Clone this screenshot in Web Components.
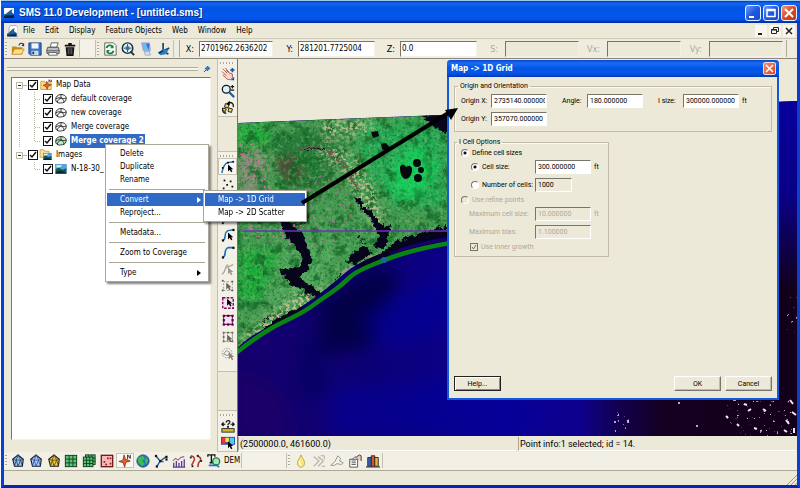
<!DOCTYPE html>
<html lang="en">
<head>
<meta charset="utf-8">
<title>SMS 11.0 Development</title>
<style>
    body {
        margin: 0;
        min-height: 100vh;
        display: flex;
        background: #fff;
        font-family: "DejaVu Sans Condensed", "DejaVu Sans", sans-serif;
        font-size: 8px;
        line-height: 12px;
        color: #000;
    }
</style>
</head>
<body>
<sms-window></sms-window>

<script>
(function () {
    // 16 x 16 drawings, shared by every toolbar and by the tree
    const cursor = (x, y, c = '#000') => `<path transform="translate(${x} ${y})" d="M0 0v8l2-2 1.5 3 1.5-.8L3.600 5.500H6z" fill="${c}"/>`;
    const dots = (pts, c = '#111', s = 2) => pts.map(([x, y]) => `<rect x="${x}" y="${y}" width="${s}" height="${s}" fill="${c}"/>`).join('');
    const mesh = (fill, line) => `<path d="M8 1l6 5-1 8H4L2 6z" fill="${fill}" stroke="#151a30" stroke-width="1.300"/><path d="M8 1L6 7l2 7 3-7zM2 6l4 1 5 0 3-1M6 7l-2 7M11 7l2 7" fill="none" stroke="${line}" stroke-width="1"/>`;
    const grid = (x, y, s) => `<rect x="${x}" y="${y}" width="${s}" height="${s}" fill="#5cc478" stroke="#0b2b14"/><path d="M${x + s / 3} ${y}v${s}M${x + 2 * s / 3} ${y}v${s}M${x} ${y + s / 3}h${s}M${x} ${y + 2 * s / 3}h${s}" stroke="#0b3b1c"/>`;
    const coverage = fill => `<g fill="${fill}" stroke="#222" stroke-width="1.200"><path d="M1 8c0-3 3-6 7-6s7 2 7 5-2 6-5 6-3 1-6 0-3-3-3-5z"/><path d="M3 12c1-3 3-5 6-5M9 2c-2 2-1 4 0 5s3 2 3 5M1 8c3-2 5-2 8-1s4 0 6 0" fill="none"/></g>`;
    const photo = '<rect x="1" y="2" width="14" height="12" fill="#49a6ea" stroke="#1d5d9c" stroke-width=".6"/><path d="M2 3h8l-4 3H2z" fill="#e4f5ff"/><path d="M1 8l4-2 5 3 5-2v7H1z" fill="#11603a"/><path d="M1 12l6-2 8 3v1H1z" fill="#07254c"/>';

    const icons = {
        app: '<rect width="16" height="16" fill="#fff"/><path d="M0 10c5 0 7-6 14-8l-2 4c1 2 3 2 4 4v6H0z" fill="#1b5f99"/><path d="M0 13c5-3 9 0 16-2v5H0z" fill="#0a2440"/>',
        doc: '<path d="M5 0h8l3 3v13H3V4z" fill="#fff" stroke="#8a98ad"/><path d="M0 12c4-1 5-6 11-8l-1 4 4 3v3H0z" fill="#1b62a0"/><path d="M0 14c4-2 9-1 14-2v4H0z" fill="#0a2c50"/>',
        open: '<path d="M1 5h5l1 1h6v8H1z" fill="#c98d1c"/><path d="M4 8h11l-3 6H1z" fill="#ffe184" stroke="#b57b10" stroke-width=".8"/><path d="M9 4c1-3 3-3 5-2" fill="none" stroke="#333" stroke-width="1.200"/><path d="M15 1v4l-3-1z" fill="#333"/>',
        save: '<path d="M1 1h14v14H3l-2-2z" fill="#3b71c4" stroke="#173a7d"/><rect x="4" y="1.500" width="8" height="6" fill="#eef5ff"/><rect x="4" y="10" width="8" height="5" fill="#c9d7e9"/><rect x="5" y="11" width="2" height="3" fill="#173a7d"/>',
        print: '<path d="M5 6l1-5h8l-2 5z" fill="#fff" stroke="#555"/><path d="M2 6h12l1 3v4H1V9z" fill="#b9bdc4" stroke="#444"/><path d="M1 10h14" stroke="#555"/><path d="M3 12h9l1 3H3z" fill="#fff" stroke="#555"/>',
        trash: '<path d="M2 3h12v2H2zM6 1h4v2H6zM3 6h10l-1 10H4z" fill="#111"/><path d="M6 7v7M8 7v7M10 7v7" stroke="#999" stroke-width=".7"/>',
        refresh: '<path d="M2 1h10l3 3v11H2z" fill="#fff" stroke="#555"/><path d="M4 7c1-4 6-4 7-1M12 10c-1 4-6 4-7 1" fill="none" stroke="#15843a" stroke-width="2"/><path d="M12 3v4H8zM4 13V9h4z" fill="#15843a"/>',
        frame: '<circle cx="7.500" cy="7" r="6" fill="#dff0fb" stroke="#173243" stroke-width="1.700"/><path d="M7.500 2.500v9M3 7h9" stroke="#173243"/><path d="M5.500 5h4v4h-4z" fill="#3f718f"/><path d="M11 11l4 4" stroke="#173243" stroke-width="2.200"/>',
        display: '<path d="M3 1h9l1 9H5z" fill="#74b8f1" stroke="#90a5c9"/><path d="M8 2h4l-1 7z" fill="#2d6fd6"/><path d="M6 11h6l1 4H7z" fill="#d8dfea" stroke="#7187ac" stroke-width=".6"/>',
        axes: '<path d="M7 1v9l7-3M7 10l6 4" fill="none" stroke="#14507c" stroke-width="2"/><path d="M1 12l6-4 6 1-3 5-6 1z" fill="#2b7fba"/><path d="M7 10l-5 3" stroke="#0c2f4f" stroke-width="1.500"/>',
        pin: '<path d="M2 14l4-4" stroke="#123" stroke-width="1.500"/><path d="M4 7l5 5 2-3 3-2-5-5-2 3z" fill="#2d7fd0" stroke="#0d3a73"/>',
        pan: '<path d="M2 2l5 5M1 5l5 5M5 1l4 5M2 9l4 4c2 2 6 2 7-1V8l-3-1-4-3" fill="#f7d6cf" stroke="#a34a45" stroke-width="1"/><path d="M13 1v5M10.500 3.500h5" stroke="#1c50a8" stroke-width="1.800"/><path d="M11 15l4 0-0-4z" fill="#1c50a8"/>',
        zoom: '<circle cx="6" cy="6" r="4.500" fill="#dff3ff" stroke="#15191d" stroke-width="1.500"/><path d="M9.500 9.500L15 15" stroke="#1f5d9e" stroke-width="2.500"/><path d="M11 3h4M13 1v4M11 7h4" stroke="#111" stroke-width="1.200"/>',
        rotate: '<path d="M8 2c4-1 7 1 6 5M2 8c-1 4 1 6 4 6" fill="none" stroke="#111" stroke-width="1.500"/><path d="M5 3l4 1-1 4-4-1zM9 8l4 1-1 4-4-1zM2 8l4 1-1 3-3-1z" fill="#f2d457" stroke="#111"/><path d="M10 0v5l-4-2z"/>',
        vertex: '<path d="M1 15C2 8 5 3 8 3l6-1" fill="none" stroke="#1e6fb8" stroke-width="1.600"/>' + dots([[7, 2], [13, 1], [1, 8]]) + cursor(8, 5),
        points: dots([[3, 3], [10, 4], [6, 8], [12, 10], [2, 12]]),
        selvertex: '<path d="M2 13L12 3" stroke="#1e6fb8" stroke-width="1.500"/>' + dots([[2, 12], [12, 2]]) + cursor(8, 6),
        node: '<path d="M2 14L9 4l5 1" fill="none" stroke="#1e6fb8" stroke-width="1.500"/>' + dots([[1, 13], [13, 4]]),
        selarc: '<path d="M2 14c5-1 0-8 6-11l6-1" fill="none" stroke="#1e6fb8" stroke-width="1.700"/>' + dots([[1, 13], [13, 1]], '#111', 2.5) + cursor(8, 5),
        arc: '<path d="M2 14c5-1 0-8 6-11h6" fill="none" stroke="#1e6fb8" stroke-width="1.900"/>' + dots([[1, 13], [13, 2]], '#111', 2.5),
        group: '<path d="M1 14c5-2 2-8 7-11M5 7l9-4" fill="none" stroke="#aaa79c" stroke-width="1.500"/>' + cursor(8, 6, '#99968c'),
        selrect: '<path d="M3 3h10v10H3z" fill="none" stroke="#8f8d84" stroke-dasharray="2 2"/>' + dots([[1, 1], [12, 2], [1, 12], [12, 12]], '#555') + cursor(6, 4, '#66635c'),
        selpoly: '<path d="M2 2h12v12H2z" fill="#f6dff1" stroke="#7b0b65" stroke-width="1.600" stroke-dasharray="3 1.500"/>' + cursor(7, 3),
        poly: '<path d="M3 3h10v10H3z" fill="#f0e2ea" stroke="#8b1272" stroke-width="1.200"/>' + dots([[2, 2], [7, 2], [12, 2], [2, 7], [12, 7], [2, 12], [7, 12], [12, 12]], '#540044', 2.5),
        polygray: '<path d="M3 3h10v10H3z" fill="none" stroke="#969389"/>' + dots([[2, 2], [12, 2], [2, 12], [12, 12], [7, 2], [2, 7]], '#66635c') + cursor(7, 5, '#66635c'),
        circle: '<circle cx="7" cy="7" r="5.500" fill="#f2f1e9" stroke="#999" stroke-dasharray="2 1"/><path d="M3 8l3-4 4 2-2 4z" fill="none" stroke="#888"/>' + cursor(9, 6, '#88857b'),
        measure: '<rect x="1" y="11" width="14" height="4" fill="#d7b52c" stroke="#222"/><path d="M1 6h4M11 6h4M3 4L1 6l2 2M13 4l2 2-2 2M6 4c0-3 5-3 4 0-1 2-2 1-2 3" fill="none" stroke="#111" stroke-width="1.400"/><path d="M7 8h2v2H7z"/>',
        palette: '<rect x="0" y="1" width="16" height="9" fill="#2449b8"/><rect x="1" y="2" width="4" height="7" fill="#e8372d"/><rect x="5" y="2" width="4" height="5" fill="#ffe25a"/><rect x="10" y="2" width="5" height="7" fill="#57cbe5"/>' + cursor(8, 6),
        mesh: mesh('#9fc4e8', '#23486f'),
        mesh2: mesh('#b5cdf2', '#2c58a8'),
        mesh3: mesh('#efce4c', '#644a08'),
        grid: grid(1.5, 1.5, 13),
        grid3: grid(4, 1, 11) + grid(1.5, 3.5, 11),
        scatter: '<rect x="1.500" y="1.500" width="13" height="13" fill="#f4b9b9" stroke="#6d1919" stroke-width="1.500"/>' + dots([[4, 8], [8, 4], [11, 10], [6, 11], [11, 4]], '#a81d1d'),
        map: '<path d="M7 1l1.500 5L14 8 9 9.500 7.500 15 6 10 1 8.500 5.500 7z" fill="#e85f24" stroke="#71240c" stroke-width=".8"/><path d="M11 6V1l3 4V1" fill="none" stroke="#111"/>',
        globe: '<circle cx="8" cy="8" r="7" fill="#2574c8" stroke="#194674"/><path d="M3 4l5-2 2 3-3 3 3 3-3 3-4-4-1-4zM11 4l3 3-2 5-2-4z" fill="#3fbd48"/>',
        river: '<path d="M2 2l5 6 7-5M7 8l-4 7M7 8l4 1" fill="none" stroke="#2c5fa6" stroke-width="1.700"/>' + dots([[1, 1], [6, 7], [13, 2], [2, 13], [13, 5]], '#111', 2.5),
        chart: '<path d="M1 15h14M2 15V10M5 15V8M8 15V10M11 15V8M14 15V6" stroke="#5a3b90" stroke-width="1.500"/><path d="M1 8l3-3 3 2 3-3 4-1" fill="none" stroke="#9a5a86" stroke-width="1.200"/>',
        tracks: '<path d="M2 2c5 1 5 4 3 7l-2 4M9 2c6 2 5 5 2 8l-1 5" fill="none" stroke="#b5382e" stroke-width="1.800"/>' + dots([[1, 3], [9, 1], [3, 13], [13, 7]]),
        gis: '<path d="M1 3V1h8v2M5 1v9M3 10h4" fill="none" stroke="#111" stroke-width="1.500"/><circle cx="10.500" cy="8.500" r="4" fill="#a8e6b7" stroke="#137e4b" stroke-width="1.500"/><path d="M2 13h9l3 2" fill="none" stroke="#2970b5" stroke-width="2"/>',
        bulb: '<path d="M8 1c1 4 4 5 4 9s-2 5-4 5-4-1-4-5 3-5 4-9z" fill="#f7e684" stroke="#b8a648"/><path d="M6 8c0 3 1 4 2 5" stroke="#fffce0" stroke-width="1.500" fill="none"/>',
        chevrons: '<path d="M2 3l6 5-6 6M7 3l6 5-6 6" fill="none" stroke="#bbb8ac" stroke-width="1.500"/><path d="M10 2h4v4M11 14h4" stroke="#a5a297" fill="none"/>',
        plane: '<path d="M1 13l5-5 3-6 3 3-1 3 4 2-2 2-5-1-3 2z" fill="#f3f2ec" stroke="#8e8b82"/>',
        props: '<path d="M2 6h9v9H2z" fill="#fff" stroke="#444"/><path d="M4 8h5M4 10h5M4 12h5M5 6l3-3 4 3" stroke="#555" fill="none"/><path d="M9 4l4-3 2 1v6" fill="#f3c8b8" stroke="#333"/>',
        books: '<path d="M2 4h4v10H2z" fill="#2f66c7" stroke="#222"/><path d="M6 2h4v12H6z" fill="#e34e2f" stroke="#222"/><path d="M10 4h4v10h-4z" fill="#e7b92c" stroke="#222"/><path d="M0 14h16v1.500H0z" fill="#444"/>',
        folder: '<path d="M1 3h5l1 2h8v9H1z" fill="#fbd77b" stroke="#c39433"/><path d="M9 3l1.500 3.500L15 8l-4 1.500L9.500 14 8 10 4 8.500 8 7z" fill="#e85f24" stroke="#71240c" stroke-width=".7"/><path d="M12 4V1l3 3V1" fill="none" stroke="#111"/>',
        images: '<path d="M0 1h5l1 2h6v8H0z" fill="#fbe29a" stroke="#c39433"/><g transform="translate(4 4) scale(.75)">' + photo + '</g>',
        photo,
        coverage: coverage('#f4f4f4'),
        active: coverage('#bdeec4')
    };

    // every element clones its template into an open shadow root
    function define(name, html, setup) {
        const template = document.createElement('template');
        template.innerHTML = html;
        customElements.define(name, class extends HTMLElement {
            connectedCallback() {
                if (this.shadowRoot) return;
                const root = this.attachShadow({ mode: 'open' });
                root.appendChild(template.content.cloneNode(true));
                if (setup) setup(this, root);
            }
        });
    }

    class SmsIcon extends HTMLElement {
        constructor() {
            super();
            this.attachShadow({ mode: 'open' }).innerHTML = `
<style>
    :host { display: block; width: 14px; height: 14px; flex: none; }
    svg { display: block; width: 100%; height: 100%; }
</style>
<svg viewBox="0 0 16 16" aria-hidden="true"></svg>`;
        }

        static get observedAttributes() {
            return ['name'];
        }

        attributeChangedCallback(attr, oldValue, newValue) {
            this.shadowRoot.querySelector('svg').innerHTML = icons[newValue] || '';
        }
    }
    customElements.define('sms-icon', SmsIcon);

    define('tool-button', `
<style>
    :host { display: flex; min-width: 0; }
    button {
        flex: 1;
        min-width: 0;
        display: flex;
        align-items: center;
        justify-content: center;
        padding: 0;
        border: 0;
        background: none;
        color: inherit;
        font: inherit;
    }
    :host([checked]) button { background: #faf9f4; box-shadow: inset 0 0 0 1px #c8c4b4; }
</style>
<button type="button"><slot></slot></button>`, (host, root) => {
        root.querySelector('button').setAttribute('aria-label', host.getAttribute('label'));
        const name = host.getAttribute('icon');
        if (name) host.innerHTML = `<sms-icon name="${name}"></sms-icon>`;
    });

    // dotted grip followed by a run of buttons
    define('tool-group', `
<style>
    :host { display: flex; flex: none; align-items: stretch; box-sizing: border-box; border-right: 1px solid #c5c1b0; }
    .grip { flex: none; width: 2px; margin: 2px 2px 2px 1px; background: repeating-linear-gradient(#a9a594 0 1px, #f7f5ec 1px 3px); }
    .run { flex: 1; display: flex; min-width: 0; }
    ::slotted(tool-button) { flex: 1; }
    :host([vertical]) { flex-direction: column; border-right: 0; border-bottom: 1px solid #c5c1b0; }
    :host([vertical]) .grip { width: auto; height: 2px; margin: 3px 2px 1px; background: repeating-linear-gradient(90deg, #a9a594 0 1px, #f7f5ec 1px 3px); }
    :host([vertical]) .run { flex-direction: column; }
    :host([vertical]) ::slotted(tool-button) { flex: 0 0 17px; }
</style>
<div class="grip"></div>
<div class="run"><slot></slot></div>`);

    define('title-bar', `
<style>
    :host {
        display: flex;
        align-items: center;
        gap: 5px;
        height: 23px;
        padding: 2px 3px 0;
        box-sizing: border-box;
        background: linear-gradient(#9cc8e8 0 1px, #0a3fd0 1px 2px, #1767f5 3px, #0253e2 8px, #0358ee 17px, #0550e0 20px, #0030b0 22px);
        color: #fff;
        font: bold 10px/14px "Liberation Sans", Arial, sans-serif;
        text-shadow: 1px 1px 0 #0a2a80;
    }
    sms-icon { width: 10px; height: 10px; }
    h1 { flex: 1; margin: 0; font: inherit; white-space: nowrap; }
    .buttons { display: flex; gap: 2px; }
    button {
        width: 16px;
        height: 16px;
        padding: 0;
        border: 1px solid #e6efff;
        border-radius: 3px;
        background: linear-gradient(135deg, #6f9af8, #2059e0 50%, #184ccf);
    }
    .close { background: linear-gradient(135deg, #f09a7c, #dd4a25 50%, #c03410); }
    svg { display: block; width: 14px; height: 14px; }
</style>
<sms-icon name="app"></sms-icon>
<h1><slot></slot></h1>
<div class="buttons">
    <button type="button" aria-label="Minimize"><svg viewBox="0 0 14 14"><path d="M3 10h5v2H3z" fill="#fff"/></svg></button>
    <button type="button" aria-label="Maximize"><svg viewBox="0 0 14 14"><path d="M3 3.500h8v7H3zM3 4.500h8" fill="none" stroke="#fff" stroke-width="1.500"/></svg></button>
    <button type="button" class="close" aria-label="Close"><svg viewBox="0 0 14 14"><path d="M3 3l8 8M11 3l-8 8" stroke="#fff" stroke-width="2"/></svg></button>
</div>`);

    define('menu-bar', `
<style>
    :host { display: flex; align-items: center; height: 16px; padding: 0 2px 0 3px; border-bottom: 1px solid #cfcbbb; box-sizing: border-box; }
    sms-icon { width: 11px; height: 12px; margin-right: 5px; }
    nav { flex: 1; display: flex; gap: 10px; }
    button { padding: 0; border: 0; background: none; font: inherit; color: inherit; }
    .mdi { display: flex; gap: 2px; }
    .mdi button { width: 12px; height: 12px; background: #f8f6ee; }
    svg { display: block; width: 12px; height: 12px; fill: none; stroke: #222; }
</style>
<sms-icon name="doc"></sms-icon>
<nav></nav>
<div class="mdi">
    <button type="button" aria-label="Minimize document"><svg viewBox="0 0 12 12"><path d="M3 9h4" stroke-width="2"/></svg></button>
    <button type="button" aria-label="Restore document"><svg viewBox="0 0 12 12"><path d="M4.500 4V2.500h5v4H8M2.500 4.500h5v4h-5zM2 5h6"/></svg></button>
    <button type="button" aria-label="Close document"><svg viewBox="0 0 12 12"><path d="M3 3l6 6M9 3l-6 6" stroke-width="1.500"/></svg></button>
</div>`, (host, root) => {
        root.querySelector('nav').innerHTML = host.getAttribute('items').split('|')
            .map(item => `<button type="button">${item}</button>`).join('');
    });

    define('coord-field', `
<style>
    :host { flex: 1; display: flex; align-items: center; min-width: 0; }
    label { flex: none; box-sizing: border-box; width: 25px; padding-right: 5px; text-align: right; font-size: 9px; }
    input {
        flex: 1;
        min-width: 0;
        height: 16px;
        box-sizing: border-box;
        padding: 0 0 1px 1px;
        border: 1px solid;
        border-color: #77746a #f4f2e8 #f4f2e8 #77746a;
        background: #fff;
        font: inherit;
    }
    input:disabled { background: #ece9d8; }
    :host([disabled]) label { width: 28px; padding-right: 7px; color: #aca899; }
    :host([narrow]) { flex: 0 0 93px; }
    :host([narrow]) label { width: 19px; }
</style>
<label for="value"></label><input id="value" type="text">`, (host, root) => {
        const input = root.querySelector('input');
        root.querySelector('label').textContent = host.getAttribute('label');
        input.value = host.getAttribute('value') || '';
        input.disabled = host.hasAttribute('disabled');
    });

    define('tree-item', `
<style>
    :host { display: flex; align-items: center; height: 14px; }
    .guide { flex: none; width: 16px; height: 14px; fill: none; stroke: #b9b6a8; }
    .indent { display: none; }
    :host([child]) .indent { display: block; width: 16px; margin-right: -1px; }
    input {
        appearance: none;
        flex: none;
        width: 10px;
        height: 10px;
        margin: 0;
        border: 1px solid #111;
        background: #fff;
    }
    .check { position: relative; display: flex; margin-right: 1px; }
    .check svg { position: absolute; left: 1px; top: 1px; width: 8px; height: 8px; pointer-events: none; visibility: hidden; }
    input:checked + svg { visibility: visible; }
    sms-icon { width: 14px; height: 12px; margin-right: 2px; }
    label { padding: 0 1px; line-height: 14px; white-space: nowrap; }
    :host([selected]) label { background: #316ac5; color: #fff; font-weight: bold; }
</style>
<svg class="guide indent" viewBox="0 0 16 14"></svg>
<svg class="guide" viewBox="0 0 16 14"></svg>
<span class="check"><input id="on" type="checkbox" checked><svg viewBox="0 0 8 8"><path d="M1 4l2 2 4-5" fill="none" stroke="#111" stroke-width="1.500"/></svg></span>
<sms-icon></sms-icon>
<label for="on"><slot></slot></label>`, (host, root) => {
        const [indent, guide] = root.querySelectorAll('.guide');
        const last = host.hasAttribute('last');
        if (host.hasAttribute('child')) {
            indent.innerHTML = host.hasAttribute('open') ? '<path d="M7.500 0v14" stroke-dasharray="1 1"/>' : '';
            guide.innerHTML = `<path d="M7.500 0v${last ? 7 : 14}M8 7.500h6" stroke-dasharray="1 1"/>`;
        } else {
            guide.innerHTML = '<path d="M4.500 4.500h6v6h-6z" fill="#fff"/><path d="M6 7.500h3" stroke="#222"/><path d="M11 7.500h4"/>';
        }
        root.querySelector('sms-icon').setAttribute('name', host.getAttribute('icon'));
    });

    define('popup-menu', `
<style>
    :host {
        position: absolute;
        z-index: 2;
        box-sizing: border-box;
        width: 104px;
        padding: 2px 1px;
        border: 1px solid #aca899;
        background: #fff;
        box-shadow: 2px 2px 2px rgba(0, 0, 0, .5);
    }
</style>
<slot></slot>`);

    define('popup-item', `
<style>
    :host { display: block; }
    button {
        display: flex;
        align-items: center;
        width: 100%;
        height: 13px;
        padding: 0 6px 0 13px;
        border: 0;
        background: none;
        color: inherit;
        font: inherit;
        line-height: 13px;
        text-align: left;
        white-space: nowrap;
    }
    span { flex: 1; }
    svg { display: none; width: 4px; height: 6px; fill: currentColor; }
    :host([submenu]) svg { display: block; }
    :host([active]) button { background: #316ac5; color: #fff; }
</style>
<button type="button"><span><slot></slot></span><svg viewBox="0 0 4 6"><path d="M0 0l4 3-4 3z"/></svg></button>`);

    define('popup-divider', `
<style>
    :host { display: flex; align-items: center; height: 7px; }
    hr { flex: 1; height: 1px; margin: 0 2px; border: 0; background: #aca899; }
</style>
<hr>`);

    // satellite picture: land on the upper left, ocean below, arc along the coast
    define('map-view', `
<style>
    :host { display: block; min-height: 0; overflow: hidden; background: #ece9d8; }
    svg { display: block; width: 100%; height: 100%; }
</style>
<svg viewBox="238 60 559 376" preserveAspectRatio="xMinYMin slice" role="img" aria-label="Map">
    <defs>
        <clipPath id="image"><path d="M238 123L797 101V436H238z"/></clipPath>
        <clipPath id="land"><path d="M238 123L797 101 640 244 447 232C425 234 405 243 389 250S355 262 338 279C322 292 312 300 290 314S252 333 238 347z"/></clipPath>
        <linearGradient id="sea" x1="238" x2="797" y1="0" y2="0" gradientUnits="userSpaceOnUse">
            <stop offset="0" stop-color="#16006c"/><stop offset=".25" stop-color="#0c0078"/>
            <stop offset=".48" stop-color="#0d0092"/><stop offset=".61" stop-color="#0e008e"/><stop offset=".68" stop-color="#120050"/>
            <stop offset=".76" stop-color="#140020"/><stop offset="1" stop-color="#12001a"/>
        </linearGradient>
        <linearGradient id="east" x1="0" x2="0" y1="101" y2="290" gradientUnits="userSpaceOnUse">
            <stop offset="0" stop-color="#08009c"/><stop offset=".5" stop-color="#0a0086"/><stop offset="1" stop-color="#12001a"/>
        </linearGradient>
        <filter id="soft" x="-50%" y="-50%" width="200%" height="200%"><feGaussianBlur stdDeviation="9"/></filter>
        <filter id="blur" x="-50%" y="-50%" width="200%" height="200%"><feGaussianBlur stdDeviation="5"/></filter>
        <filter id="rough" x="-20%" y="-20%" width="140%" height="140%" color-interpolation-filters="sRGB"><feTurbulence type="fractalNoise" baseFrequency=".22" numOctaves="2" seed="8"/><feDisplacementMap in="SourceGraphic" scale="8" xChannelSelector="R" yChannelSelector="G"/></filter>
        <filter id="bright" x="0" y="0" width="100%" height="100%" color-interpolation-filters="sRGB"><feTurbulence type="fractalNoise" baseFrequency=".25" numOctaves="3" seed="4"/><feColorMatrix values="0 0 0 0 .5  0 0 0 0 .74  0 0 0 0 .45  5 0 0 0 -2.5"/></filter>
        <filter id="green" x="0" y="0" width="100%" height="100%" color-interpolation-filters="sRGB"><feTurbulence type="fractalNoise" baseFrequency=".09" numOctaves="4" seed="21"/><feColorMatrix values="0 0 0 0 .08  0 0 0 0 .42  0 0 0 0 .16  0 5 0 0 -2.5"/></filter>
        <filter id="pink" x="0" y="0" width="100%" height="100%" color-interpolation-filters="sRGB"><feTurbulence type="fractalNoise" baseFrequency=".28" numOctaves="2" seed="13"/><feColorMatrix values="0 0 0 0 .8  0 0 0 0 .42  0 0 0 0 .62  0 0 8 0 -4.9" result="n"/><feComposite in="n" in2="SourceAlpha" operator="in"/></filter>
        <filter id="sand" x="-10%" y="-10%" width="120%" height="120%" color-interpolation-filters="sRGB"><feTurbulence type="fractalNoise" baseFrequency=".3" numOctaves="3" seed="3"/><feColorMatrix values="0 0 0 0 .76  0 0 0 0 .74  0 0 0 0 .58  0 6 0 0 -2.8" result="n"/><feGaussianBlur in="SourceAlpha" stdDeviation="5" result="a"/><feComposite in="n" in2="a" operator="in"/></filter>
        <filter id="dark" x="0" y="0" width="100%" height="100%" color-interpolation-filters="sRGB"><feTurbulence type="fractalNoise" baseFrequency=".4" numOctaves="2" seed="30"/><feColorMatrix values="0 0 0 0 .06  0 0 0 0 .28  0 0 0 0 .12  0 0 6 0 -3.4"/></filter>
        <filter id="stars" x="0" y="0" width="100%" height="100%" color-interpolation-filters="sRGB"><feTurbulence type="fractalNoise" baseFrequency=".3" numOctaves="2" seed="6"/><feColorMatrix values="0 0 0 0 .85  0 0 0 0 .66  0 0 0 0 .88  14 0 0 0 -9.8" result="n"/><feComposite in="n" in2="SourceAlpha" operator="in"/></filter>
    </defs>
    <g clip-path="url(#image)">
        <rect x="238" y="101" width="559" height="335" fill="url(#sea)"/>
        <rect x="770" y="101" width="27" height="200" fill="url(#east)"/>
        <g filter="url(#soft)">
            <path d="M320 300l60-34 20 10-30 70-50 10z" fill="#06003c" opacity=".8"/>
            <path d="M360 320l90-50v60l-60 20z" fill="#0c00a0" opacity=".5"/>
            <path d="M238 370l40 20 20 46h-60z" fill="#220060" opacity=".5"/>
            <path d="M330 390l120-10 110 30-40 26H330z" fill="#0a00a0" opacity=".5"/>
            <path d="M300 310l30 80-30 10z" fill="#0a0058" opacity=".6"/>
        </g>
        <path d="M355 268C375 250 410 236 447 226V244C410 250 390 262 362 270z" fill="#060028"/>
        <path d="M390 253c16-8 35-12 57-16v4c-22 3-40 8-57 14z" fill="#14006c"/>
        <g clip-path="url(#land)">
            <rect x="238" y="101" width="260" height="250" fill="#439b50"/>
            <g filter="url(#blur)">
                <path d="M365 122h80v85h-50l-40-45z" fill="#23ac54"/>
                <path d="M238 125h30v40h-30zM240 250h40l-20 50h-22z" fill="#1fae3a"/>
                <path d="M270 135l60-10 15 30-30 40-35-10z" fill="#287c3a"/>
                <path d="M272 160l22-6 10 20-14 12z" fill="#4f4a38"/>
                <path d="M395 165l22-20 18 20-18 34-24-6z" fill="#16ce5c"/>
                <path d="M238 150h30l-8 45-22 10z" fill="#7c8f72"/>
                <path d="M290 240h50l-20 50-60 30z" fill="#4fa85c"/>
            </g>
            <rect x="238" y="101" width="210" height="250" filter="url(#green)" opacity=".8"/>
            <rect x="238" y="101" width="210" height="250" filter="url(#bright)" opacity=".4"/>
            <rect x="238" y="101" width="210" height="250" filter="url(#dark)" opacity=".4"/>
            <path d="M395 165l22-20 20 20-18 34-24-6z" fill="#16ce5c" opacity=".5" filter="url(#blur)"/>
            <path d="M238 140l24 5 10 30 20 40 20 10-20 20-30-5-24-10z" filter="url(#pink)"/>
            <path d="M270 200l60-30 30 40-30 40-50-10z" filter="url(#pink)" opacity=".6"/>
            <path d="M320 120h60l-10 14-50 5zM318 146c30-6 52 20 60 54l10 30h-15l-30-60-25-14zM238 340l60-50 60-5 60-45h30v14l-90 35-110 65z" filter="url(#sand)"/>
            <path d="M400 240l47-14v14l-50 14zM340 272l50-24 8 8-50 24z" fill="#c9a49a" opacity=".6" filter="url(#rough)"/>
        </g>
        <g fill="#07041c" filter="url(#rough)">
            <path d="M422 115l28-2v20l-12-3-8-8z"/>
            <path d="M280 221l8-2 6 9 8 4 5 14 5 10-3 13-9 8 6 6 10 5 4 9-9-1-8-8-10-1-7-8-8-9 12-2 10-2 2-8-6-12-8-8-7-14z"/>
            <path d="M355 198l4-1 5 10 8 4 6 9 6 7 7-2-2 10-3 12-6 2-7-3 6-8-3-10-6-10-6-5z"/>
            <path d="M346 262l10-11 10-5 6 8-18 10zM382 252l14-10 22-8 30-9v9l-34 8-26 12z"/>
            <path d="M262 328l20-12 22-10 2 4-40 22z"/>
        </g>
        <g fill="none" stroke="#0b0c1e" filter="url(#rough)">
            <path d="M301 150c8-6 16-2 22 0s17 8 23 18l12 22" stroke="#6d5c50" stroke-width="2"/>
            <path d="M302 150c8-4 16-2 22 0" stroke-width="1.200"/>
            <path d="M288 224h12c6 0 8-4 8-10M358 236l12 14M262 326l8-12M326 296l14-22"/>
        </g>
        <g fill="#06080d">
            <path d="M400 167c2-4 5-2 6 0 3-2 7-1 6 4s-3 8-7 8c-4-2-5-7-5-12z"/>
            <circle cx="417" cy="163" r="4"/><circle cx="421" cy="170" r="3"/><circle cx="418" cy="178" r="4"/>
            <path d="M381 144l5-1 4 5-3 4-5-3zM371 132l7-1 1 5-6 2z"/>
        </g>
        <path d="M242 231H447" stroke="#6a35b5" stroke-width="1.500"/>
        <path d="M236 353C256 337 262 334 272 328S300 315 312 306 330 294 340 286 350 274 372 265 410 250 450 243" fill="none" stroke="#0a8414" stroke-width="4.500"/>
        <circle cx="384" cy="260" r="3" fill="#1767a0"/>
        <path d="M612 410l20 4-6 21-8-6zM722 408l12-10 30 4 33-4v38h-60zM783 290l14 5v42l-10-8z" filter="url(#stars)"/>
        <path d="M780 424l6-12 4-10 10-4v40h-22z" filter="url(#stars)"/>
        <path d="M734 399l2 1M744 404l3 1M748 411l3-2M763 409l3 2M754 428l3 1M726 416l2 2M786 420l3 4M792 412l4 3M790 400l3 4M794 428v5M784 430l3 2M737 424l2 2" stroke="#fbe2f6" stroke-width="2"/>
        <path d="M614 422h2M615 431h1M696 426h2M678 403h2" stroke="#b9a4cc" stroke-width="2"/>
    </g>
</svg>`);

    define('status-bar', `
<style>
    :host { display: flex; height: 14px; margin: 1px 1px 1px 0; gap: 2px; font: 9px/14px Roboto, "Liberation Sans", sans-serif; }
    div { flex: 1; min-width: 0; box-sizing: border-box; padding-left: 1px; border-left: 1px solid #aca899; border-bottom: 1px solid #fff; white-space: nowrap; }
</style>
<div><slot name="cursor"></slot></div><div><slot name="info"></slot></div>`);

    // label + text box (+ unit) used inside the dialog
    define('number-field', `
<style>
    :host { display: flex; align-items: center; }
    label { width: 30px; white-space: nowrap; }
    input {
        width: 56px;
        height: 14px;
        box-sizing: border-box;
        padding: 0 1px 1px 2px;
        border: 1px solid;
        border-color: #77746a #fff #fff #77746a;
        background: #fff;
        font: inherit;
    }
    .unit { padding-left: 3px; }
    :host([short]) label { width: 25px; }
    :host([wide]) label { width: 66px; }
    :host([disabled]) { color: #aca899; }
    input:disabled { background: #ece9d8; color: #aca899; }
</style>
<label for="value"></label><input id="value" type="text"><span class="unit"><slot></slot></span>`, (host, root) => {
        const input = root.querySelector('input');
        root.querySelector('label').textContent = host.getAttribute('label');
        input.value = host.getAttribute('value');
        input.disabled = host.hasAttribute('disabled');
    });

    define('grid-dialog', `
<style>
    :host {
        position: absolute;
        z-index: 1;
        display: flex;
        flex-direction: column;
        box-sizing: border-box;
        border: 2px solid #1259dc;
        border-top: 0;
        border-radius: 4px 4px 0 0;
        background: #ece9d8;
        font: 7px/10px Roboto, "Liberation Sans", sans-serif;
    }
    header {
        display: flex;
        align-items: center;
        height: 17px;
        margin: 0 -2px;
        padding: 0 3px 0 4px;
        border-radius: 4px 4px 0 0;
        background: linear-gradient(#0a44cc, #1a6cf5 3px, #0455e6 8px, #0556e8 13px, #0038b8);
        color: #fff;
    }
    h2 { flex: 1; margin: 0; font: bold 8px/12px "DejaVu Sans Condensed", sans-serif; }
    header button { width: 13px; height: 13px; padding: 0; border: 1px solid #f3d9d2; border-radius: 2px; background: linear-gradient(135deg, #ee9078, #d8431f); }
    header svg { display: block; width: 11px; height: 11px; }
    form { flex: 1; display: flex; flex-direction: column; padding: 4px 5px 7px; }
    fieldset { margin: 0; min-width: 0; border: 1px solid #c0bca9; box-shadow: inset 1px 1px 0 #fbf9f0; padding: 3px 6px 5px; }
    legend { margin-left: -3px; padding: 0 2px; }
    .origin { display: grid; grid-template-columns: auto auto auto 1fr; gap: 4px 12px; }
    .cells { width: 155px; box-sizing: border-box; margin-top: 5px; padding: 0 5px 4px; }
    .cells .stack { display: flex; flex-direction: column; }
    .row { display: flex; align-items: center; height: 18px; }
    .row.low { height: 11px; }
    .row.sub { padding-left: 10px; }
    .row.text { padding-left: 9px; }
    .row label { white-space: nowrap; }
    .row.sub > label { width: 53px; }
    .disabled { color: #aca899; }
    input[type=text] {
        width: 56px;
        height: 14px;
        box-sizing: border-box;
        padding: 0 1px 1px 2px;
        border: 1px solid;
        border-color: #77746a #fff #fff #77746a;
        background: #fff;
        font: inherit;
    }
    input.count { width: 37px; background: #ece9d8; }
    .unit { padding-left: 3px; }
    input[type=radio], input[type=checkbox] {
        appearance: none;
        flex: none;
        width: 8px;
        height: 8px;
        margin: 0 3px 0 1px;
        box-sizing: border-box;
        border: 1px solid;
        border-color: #77746a #fff #fff #77746a;
        background: #fff;
    }
    input[type=radio] { border-radius: 50%; }
    input[type=radio]:checked { background: radial-gradient(circle, #111 0 1px, #fff 2px); }
    input:disabled { background-color: #ece9d8; }
    .tick { position: relative; display: flex; }
    .tick svg { position: absolute; left: 2px; top: 1px; width: 6px; height: 6px; }
    .tick input { border-color: #77746a; }
    footer { display: flex; gap: 4px; margin-top: auto; }
    footer button {
        width: 47px;
        height: 15px;
        padding: 0;
        border: 1px solid;
        border-color: #fff #77746a #77746a #fff;
        box-shadow: inset -1px -1px 0 #c0bca9;
        background: #ece9d8;
        font: inherit;
    }
    footer .help { margin-right: auto; border-color: #222; box-shadow: inset 1px 1px 0 #fff, inset -1px -1px 0 #8d8a7d; }
</style>
<header>
    <h2>Map -&gt; 1D Grid</h2>
    <button type="button" aria-label="Close"><svg viewBox="0 0 11 11"><path d="M2 2l7 7M9 2L2 9" stroke="#fff" stroke-width="1.500"/></svg></button>
</header>
<form>
    <fieldset>
        <legend>Origin and Orientation</legend>
        <div class="origin">
            <number-field label="Origin X:" value="2735140.000000"></number-field>
            <number-field label="Angle:" value="180.000000" short></number-field>
            <number-field label="I size:" value="300000.000000" short>ft</number-field>
            <span></span>
            <number-field label="Origin Y:" value="357070.000000"></number-field>
        </div>
    </fieldset>
    <fieldset class="cells">
        <legend>I Cell Options</legend>
        <div class="stack">
            <div class="row low"><input type="radio" id="define" name="mode" checked><label for="define">Define cell sizes</label></div>
            <div class="row sub"><input type="radio" id="size" name="by" checked><label for="size">Cell size:</label><input type="text" value="300.000000" aria-label="Cell size"><span class="unit">ft</span></div>
            <div class="row sub"><input type="radio" id="number" name="by"><label for="number">Number of cells:</label><input type="text" class="count" value="1000" aria-label="Number of cells"></div>
            <div class="row low disabled"><input type="radio" id="refine" name="mode" disabled><label for="refine">Use refine points</label></div>
            <div class="row text"><number-field label="Maximum cell size:" value="10.000000" wide disabled>ft</number-field></div>
            <div class="row text"><number-field label="Maximum bias:" value="1.100000" wide disabled></number-field></div>
            <div class="row low text disabled"><span class="tick"><input type="checkbox" id="growth" checked disabled><svg viewBox="0 0 6 6"><path d="M1 3l1.500 2L5 1" fill="none" stroke="#77746a"/></svg></span><label for="growth">Use inner growth</label></div>
        </div>
    </fieldset>
    <footer>
        <button type="button" class="help">Help...</button>
        <button type="button">OK</button>
        <button type="button">Cancel</button>
    </footer>
</form>`);

    // "name*" marks the pressed button
    const buttons = list => list.split(' ').map(item => {
        const [icon, on] = item.split('*');
        return `<tool-button icon="${icon}" label="${icon}"${on === undefined ? '' : ' checked'}></tool-button>`;
    }).join('');

    define('sms-window', `
<style>
    :host {
        position: relative;
        flex: 1;
        display: flex;
        flex-direction: column;
        min-width: 0;
        box-sizing: border-box;
        margin-left: 1px;
        background: #ece9d8;
    }
    .frame { flex: 1; display: flex; flex-direction: column; min-height: 0; border: solid #0a3fd6; border-width: 0 3px 3px; border-bottom-color: #0028b0; }
    .top { display: flex; height: 20px; box-sizing: border-box; padding: 1px 0; border-bottom: 1px solid #8d8a7d; background: #efecde; }
    .top tool-group:first-child { width: 76px; }
    .top tool-group:nth-of-type(2) { width: 78px; }
    .blank { flex: none; background: #f4f2e8; border-right: 1px solid #c5c1b0; }
    .top .blank { width: 15px; }
    .fields { flex: 1; display: flex; min-width: 0; margin-left: 5px; border-left: 1px solid #aca899; }
    .tail { flex: none; width: 14px; background: linear-gradient(90deg, transparent 3px, #aca899 3px 4px, transparent 4px); }
    main { flex: 1; display: flex; min-height: 0; }
    .side { flex: none; width: 213px; display: flex; flex-direction: column; box-sizing: border-box; padding: 1px 6px 12px 7px; }
    .dock { display: flex; align-items: center; gap: 4px; height: 17px; margin-left: -4px; }
    .dock i { flex: 1; height: 4px; box-sizing: border-box; border: solid #b3af9d; border-width: 1px 0; background: #f7f5ec; }
    .dock tool-button { width: 9px; }
    .dock sms-icon { width: 8px; height: 8px; }
    .tree { flex: 1; min-height: 0; background: #fff; border: 1px solid; border-color: #77746a #f4f2e8 #f4f2e8 #77746a; }
    .tools { flex: none; width: 20px; display: flex; flex-direction: column; background: #f3f1e6; box-sizing: border-box; border-left: 1px solid #c5c1b0; }
    .tools .blank { height: 34px; border: 0; border-bottom: 1px solid #c5c1b0; background: #ece9d8; }
    .tools .edit { padding-bottom: 9px; }
    .tools .blank.rest { flex: 1; height: auto; }
    .view { flex: 1; display: flex; flex-direction: column; min-width: 0; box-sizing: border-box; padding-top: 1px; border-left: 1px solid #77746a; }
    map-view { flex: 1; }
    .bottom { display: flex; height: 19px; box-sizing: border-box; padding: 1px 0 2px; border-bottom: 1px solid #aca899; background: #f2f0e5; }
    .bottom tool-group:first-child { width: 238px; }
    .bottom .blank { width: 44px; }
    .bottom tool-group:nth-of-type(2) { width: 96px; }
    .strip { height: 14px; display: flex; justify-content: flex-end; align-items: flex-end; }
    .strip svg { width: 10px; height: 10px; stroke: #9b978a; }
    .context { left: 104px; top: 144px; }
    .sub { left: 202px; top: 190px; }
    grid-dialog { left: 446px; top: 60px; width: 332px; height: 340px; }
    .arrow { position: absolute; z-index: 3; left: 298px; top: 100px; width: 165px; height: 108px; pointer-events: none; }
</style>
<title-bar>SMS 11.0 Development - [untitled.sms]</title-bar>
<div class="frame">
    <menu-bar items="File|Edit|Display|Feature Objects|Web|Window|Help"></menu-bar>
    <div class="top">
        <tool-group>${buttons('open save print trash')}</tool-group>
        <div class="blank"></div>
        <tool-group>${buttons('refresh frame display axes')}</tool-group>
        <div class="fields">
            <coord-field label="X:" value="2701962.2636202" narrow></coord-field>
            <coord-field label="Y:" value="281201.7725004"></coord-field>
            <coord-field label="Z:" value="0.0"></coord-field>
            <coord-field label="S:" disabled></coord-field>
            <coord-field label="Vx:" disabled></coord-field>
            <coord-field label="Vy:" disabled></coord-field>
        </div>
        <div class="tail"></div>
    </div>
    <main>
        <div class="side">
            <div class="dock"><i></i><tool-button label="Pin panel"><sms-icon name="pin"></sms-icon></tool-button></div>
            <div class="tree">
                <tree-item icon="folder">Map Data</tree-item>
                <tree-item icon="coverage" child open>default coverage</tree-item>
                <tree-item icon="coverage" child open>new coverage</tree-item>
                <tree-item icon="coverage" child open>Merge coverage</tree-item>
                <tree-item icon="active" child open last selected>Merge coverage 2</tree-item>
                <tree-item icon="images">Images</tree-item>
                <tree-item icon="photo" child last>N-18-30_</tree-item>
            </div>
        </div>
        <div class="tools">
            <tool-group vertical>${buttons('pan zoom rotate')}</tool-group>
            <div class="blank"></div>
            <tool-group vertical class="edit">${buttons('vertex* points selvertex node selarc arc group selrect selpoly poly polygray circle')}</tool-group>
            <div class="blank rest"></div>
            <tool-group vertical>${buttons('measure palette')}</tool-group>
        </div>
        <div class="view">
            <map-view></map-view>
            <status-bar><span slot="cursor">(2500000.0, 461600.0)</span><span slot="info">Point info:1 selected; id = 14.</span></status-bar>
        </div>
    </main>
    <div class="bottom">
        <tool-group>${buttons('mesh mesh2 mesh3 grid grid3 scatter map* globe river chart tracks gis')}<tool-button label="DEM">DEM</tool-button></tool-group>
        <div class="blank"></div>
        <tool-group>${buttons('bulb chevrons plane props books')}</tool-group>
    </div>
    <div class="strip"><svg viewBox="0 0 10 10"><path d="M0 10L10 0M4 10l6-6M8 10l2-2"/></svg></div>
</div>
<grid-dialog></grid-dialog>
<popup-menu class="context">
    <popup-item>Delete</popup-item>
    <popup-item>Duplicate</popup-item>
    <popup-item>Rename</popup-item>
    <popup-divider></popup-divider>
    <popup-item active submenu>Convert</popup-item>
    <popup-item>Reproject...</popup-item>
    <popup-divider></popup-divider>
    <popup-item>Metadata...</popup-item>
    <popup-divider></popup-divider>
    <popup-item>Zoom to Coverage</popup-item>
    <popup-divider></popup-divider>
    <popup-item submenu>Type</popup-item>
</popup-menu>
<popup-menu class="sub">
    <popup-item active>Map -&gt; 1D Grid</popup-item>
    <popup-item>Map -&gt; 2D Scatter</popup-item>
</popup-menu>
<svg class="arrow" viewBox="299 100 165 108"><path d="M302 203L450 112" stroke="#000" stroke-width="4"/><path d="M458 108l-7 12-6-10z"/></svg>`);
})();
</script>
</body>
</html>
